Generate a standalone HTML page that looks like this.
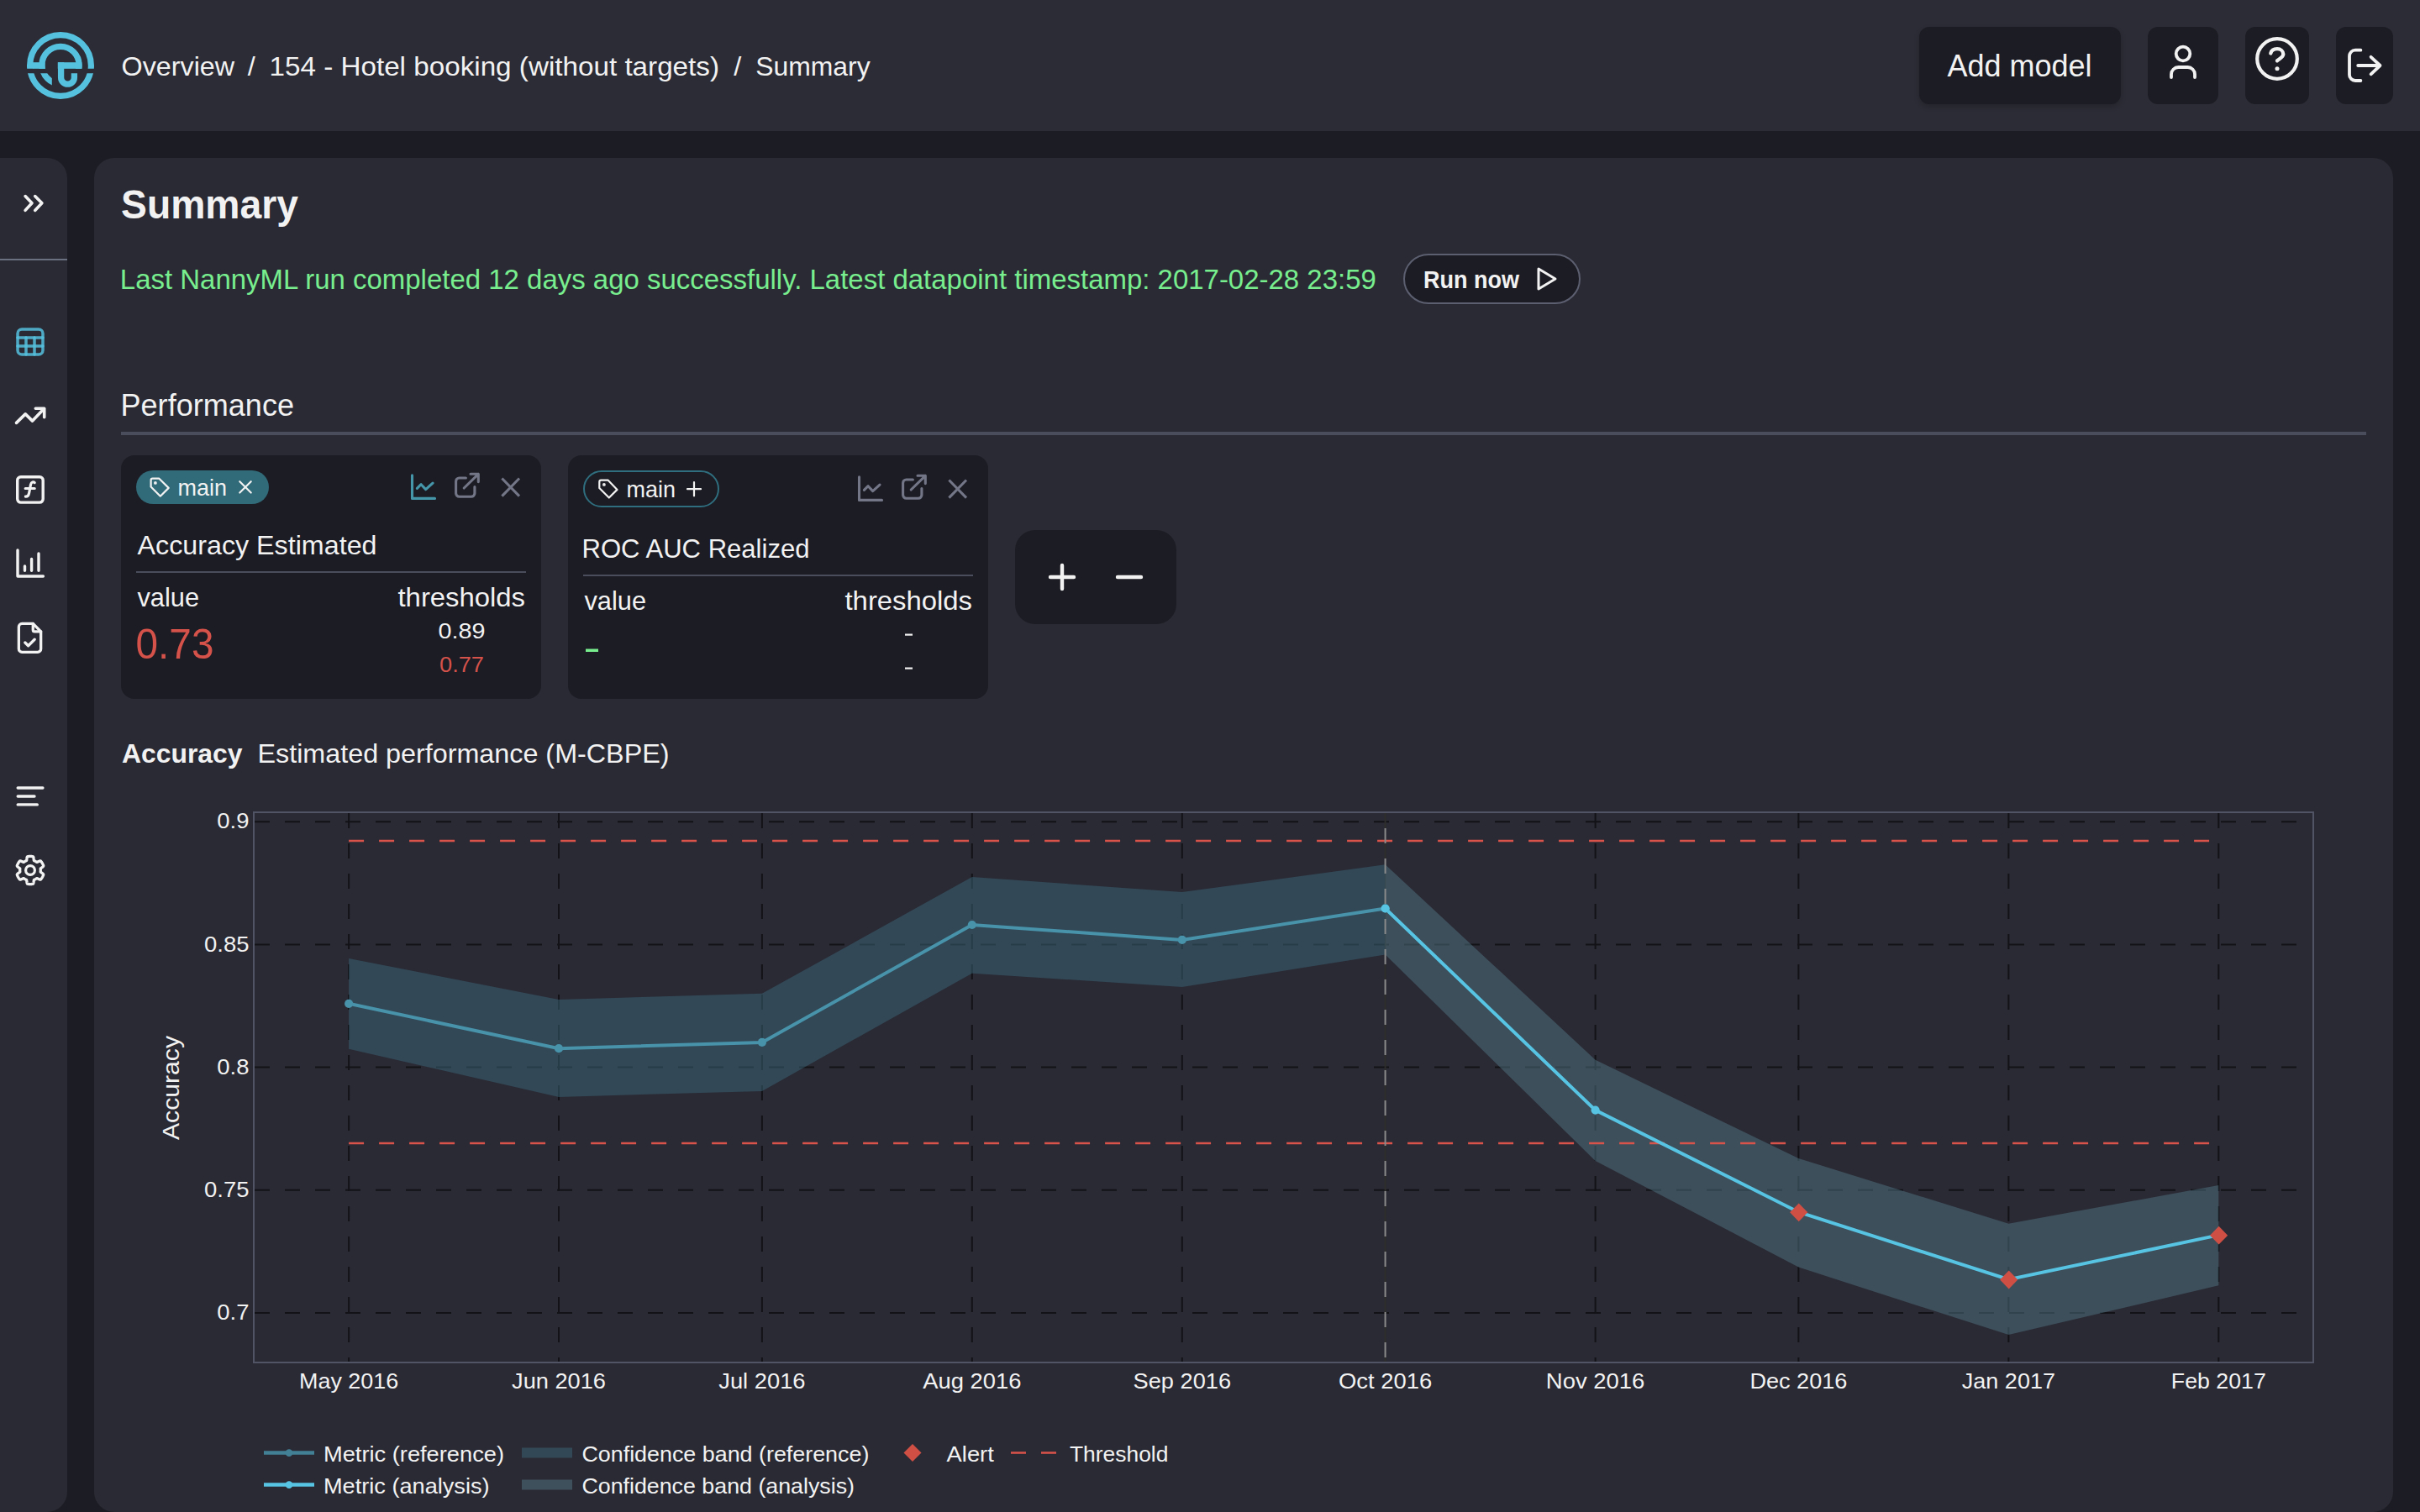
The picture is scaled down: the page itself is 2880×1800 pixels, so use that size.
<!DOCTYPE html>
<html><head><meta charset="utf-8"><title>Summary</title>
<style>
html,body{margin:0;padding:0;width:2880px;height:1800px;overflow:hidden;background:#1c1c24;font-family:"Liberation Sans",sans-serif;}
.abs{position:absolute;}
#header{left:0;top:0;width:2880px;height:156px;background:#2c2c36;}
#sidebar{left:0;top:188px;width:80px;height:1612px;background:#2a2a34;border-radius:0 24px 24px 0;}
#main{left:112px;top:188px;width:2736px;height:1612px;background:#2a2a34;border-radius:24px;}
.btn{background:#1c1c24;border-radius:12px;}
.card{background:#1c1c24;border-radius:16px;}
svg text{font-family:"Liberation Sans",sans-serif;}
</style></head><body>
<div class="abs" id="header"></div>
<div class="abs btn" style="left:2284px;top:32px;width:240px;height:92px;box-shadow:0 3px 6px rgba(0,0,0,0.18);"></div>
<div class="abs btn" style="left:2556px;top:32px;width:84px;height:92px;"></div>
<div class="abs btn" style="left:2672px;top:32px;width:76px;height:92px;"></div>
<div class="abs btn" style="left:2780px;top:32px;width:68px;height:92px;"></div>
<div class="abs" id="sidebar"></div>
<div class="abs" id="main"></div>
<div class="abs" style="left:0;top:308px;width:80px;height:2px;background:#6b7080;"></div>
<div class="abs" style="left:1670px;top:302px;width:207px;height:56px;border:2px solid #5c5f70;border-radius:30px;background:#1c1c24;"></div>
<div class="abs" style="left:144px;top:514px;width:2672px;height:4px;background:#4a4d5c;"></div>
<div class="abs card" style="left:144px;top:542px;width:500px;height:290px;"></div>
<div class="abs card" style="left:676px;top:542px;width:500px;height:290px;"></div>
<div class="abs" style="left:162px;top:560px;width:158px;height:40px;border-radius:20px;background:#316a78;"></div>
<div class="abs" style="left:694px;top:560px;width:158px;height:40px;border-radius:22px;border:2px solid #2f6e7e;"></div>
<div class="abs" style="left:162px;top:680px;width:464px;height:2px;background:#4a4d5c;"></div>
<div class="abs" style="left:694px;top:684px;width:464px;height:2px;background:#4a4d5c;"></div>
<div class="abs card" style="left:1208px;top:631px;width:192px;height:112px;border-radius:24px;"></div>

<svg class="abs" style="left:0;top:0" width="2880" height="1800" viewBox="0 0 2880 1800">
<g transform="translate(72,78)" fill="none" stroke="#55c1de">
<defs>
<clipPath id="lgUp"><rect x="-50" y="-50" width="100" height="53.8"/></clipPath>
<clipPath id="lgDn"><rect x="-50" y="9.3" width="100" height="50"/></clipPath>
<clipPath id="lgDnL"><rect x="-50" y="9.3" width="39.8" height="50"/></clipPath>
</defs>
<circle r="36.4" stroke-width="7.2" clip-path="url(#lgUp)"/>
<circle r="36.4" stroke-width="7.2" clip-path="url(#lgDn)"/>
<circle cy="-0.6" r="22.1" stroke-width="7.3" clip-path="url(#lgUp)"/>
<circle r="21.8" stroke-width="7.3" clip-path="url(#lgDnL)"/>
<rect x="-33" y="-3.8" width="14.5" height="7.6" fill="#55c1de" stroke="none"/>
<rect x="-3.2" y="-3.8" width="28.6" height="7.6" fill="#55c1de" stroke="none"/>
<path d="M0.6 -3.8 V14.3 A7.9 7.9 0 0 0 16.4 14.3 V9.3" stroke-width="7.3"/>
</g>
<text x="144.6" y="89.8" font-size="32" font-weight="400" fill="#f2f2f2" text-anchor="start" textLength="134.5" lengthAdjust="spacingAndGlyphs" >Overview</text>
<text x="294.8" y="89.8" font-size="32" font-weight="400" fill="#f2f2f2" text-anchor="start" textLength="9" lengthAdjust="spacingAndGlyphs" >/</text>
<text x="320.5" y="89.8" font-size="32" font-weight="400" fill="#f2f2f2" text-anchor="start" textLength="535.5" lengthAdjust="spacingAndGlyphs" >154 - Hotel booking (without targets)</text>
<text x="873.3" y="89.8" font-size="32" font-weight="400" fill="#f2f2f2" text-anchor="start" textLength="9" lengthAdjust="spacingAndGlyphs" >/</text>
<text x="899.2" y="89.8" font-size="32" font-weight="400" fill="#f2f2f2" text-anchor="start" textLength="136.5" lengthAdjust="spacingAndGlyphs" >Summary</text>
<text x="2317.5" y="90.8" font-size="36" font-weight="400" fill="#f2f2f2" text-anchor="start" textLength="172" lengthAdjust="spacingAndGlyphs" >Add model</text>
<g fill="none" stroke="#f2f2f2" stroke-width="3.8" stroke-linecap="round" stroke-linejoin="round">
<circle cx="2598" cy="64" r="8.3"/>
<path d="M2584 92 V88.5 A8.5 8.5 0 0 1 2592.5 80 H2603.5 A8.5 8.5 0 0 1 2612 88.5 V92"/>
<circle cx="2710" cy="70" r="23.8" stroke-width="4.2"/>
<path d="M2702.3 63.5 C2703.2 60 2706.3 58.2 2710 58.2 C2714.2 58.2 2717.3 61 2717.3 64.6 C2717.3 68 2713.8 69.3 2710 72.3" stroke-width="4.3"/>
<circle cx="2710" cy="81.8" r="2.5" fill="#f2f2f2" stroke="none"/>
<path d="M2809.4 59.7 H2803 A7 7 0 0 0 2796 66.7 V89 A7 7 0 0 0 2803 96 H2809.4"/>
<path d="M2806.2 78 H2832.5 M2821.6 67.8 L2832.5 78 L2821.6 88.3"/>
</g>
<g fill="none" stroke="#f2f2f2" stroke-width="3.4" stroke-linecap="round" stroke-linejoin="round">
<path d="M30.1 233.6 L38 241.8 L30.1 250.4 M41.7 233.6 L49.9 241.8 L41.7 250.4" stroke-width="3.6"/>
<g stroke="#55c1de" stroke-opacity="0.85" stroke-width="3.5"><rect x="21" y="392" width="30" height="30" rx="5"/><path d="M21 402 H51"/><path d="M21 412 H51"/><path d="M31 402 V422"/><path d="M41 402 V422"/></g>
<path d="M19.5 503.4 L30.2 492.9 L38.6 501.1 L52.7 486.3 M42.3 486.3 H52.7 V496.8" stroke-width="3.6"/>
<rect x="20.7" y="567.7" width="30.5" height="30.4" rx="4"/>
<path d="M41.2 574.6 C40 573.4 37.2 573.4 36.5 577 L34.6 587 C34 590.5 31.8 591.3 30.4 591.2 M30.2 581.5 H41.2" stroke-width="3.2"/>
<path d="M21 655 V686 H51.4 M29.5 674 V679.3 M37.6 665.5 V679.3 M46 658.9 V679.3"/>
<g transform="translate(12.95,736.8) scale(1.88)" stroke-width="1.75"><path d="M14 3v4a1 1 0 0 0 1 1h4"/><path d="M17 21h-10a2 2 0 0 1 -2 -2v-14a2 2 0 0 1 2 -2h7l5 5v11a2 2 0 0 1 -2 2z"/><path d="M9 15l2 2l4 -4"/></g>
<path d="M21.2 938 H50.9 M21.2 948 H41 M21.2 957.9 H44.3"/>

<path d="M48.30 1036.00 L48.30 1036.11 L48.30 1036.21 L48.30 1036.32 L48.29 1036.43 L48.29 1036.54 L48.28 1036.64 L48.28 1036.75 L48.27 1036.86 L48.26 1036.97 L48.25 1037.07 L48.24 1037.18 L48.23 1037.29 L48.22 1037.39 L48.21 1037.50 L48.19 1037.61 L48.18 1037.71 L48.19 1037.82 L48.23 1037.94 L48.32 1038.06 L48.45 1038.20 L48.61 1038.34 L48.80 1038.49 L49.02 1038.65 L49.26 1038.82 L49.52 1039.00 L49.78 1039.18 L50.05 1039.37 L50.32 1039.57 L50.58 1039.77 L50.82 1039.97 L51.04 1040.17 L51.24 1040.37 L51.41 1040.57 L51.55 1040.75 L51.65 1040.93 L51.70 1041.10 L51.72 1041.26 L51.70 1041.40 L51.65 1041.54 L51.60 1041.68 L51.55 1041.81 L51.50 1041.95 L51.44 1042.08 L51.39 1042.22 L51.34 1042.35 L51.28 1042.49 L51.22 1042.62 L51.16 1042.75 L51.11 1042.88 L51.04 1043.02 L50.98 1043.15 L50.92 1043.28 L50.86 1043.41 L50.79 1043.54 L50.72 1043.67 L50.66 1043.79 L50.59 1043.92 L50.52 1044.05 L50.45 1044.17 L50.38 1044.30 L50.30 1044.43 L50.23 1044.55 L50.15 1044.67 L50.08 1044.80 L50.00 1044.92 L49.92 1045.04 L49.84 1045.16 L49.76 1045.28 L49.68 1045.40 L49.60 1045.52 L49.51 1045.64 L49.43 1045.76 L49.34 1045.87 L49.26 1045.99 L49.17 1046.11 L49.08 1046.22 L48.99 1046.33 L48.90 1046.45 L48.81 1046.56 L48.72 1046.67 L48.62 1046.78 L48.53 1046.89 L48.42 1046.98 L48.27 1047.05 L48.10 1047.08 L47.89 1047.09 L47.66 1047.07 L47.41 1047.02 L47.14 1046.94 L46.85 1046.85 L46.55 1046.74 L46.25 1046.61 L45.95 1046.48 L45.65 1046.34 L45.35 1046.21 L45.07 1046.07 L44.80 1045.95 L44.56 1045.84 L44.33 1045.75 L44.13 1045.68 L43.95 1045.64 L43.80 1045.63 L43.67 1045.64 L43.57 1045.69 L43.49 1045.76 L43.40 1045.82 L43.32 1045.89 L43.23 1045.95 L43.14 1046.01 L43.05 1046.08 L42.97 1046.14 L42.88 1046.20 L42.79 1046.26 L42.70 1046.32 L42.61 1046.37 L42.52 1046.43 L42.43 1046.49 L42.33 1046.54 L42.24 1046.60 L42.15 1046.65 L42.06 1046.71 L41.96 1046.76 L41.87 1046.81 L41.77 1046.86 L41.68 1046.91 L41.58 1046.96 L41.49 1047.01 L41.39 1047.06 L41.30 1047.10 L41.20 1047.15 L41.10 1047.19 L41.00 1047.24 L40.90 1047.28 L40.81 1047.32 L40.71 1047.36 L40.61 1047.40 L40.52 1047.46 L40.44 1047.56 L40.38 1047.70 L40.32 1047.88 L40.28 1048.09 L40.25 1048.33 L40.22 1048.60 L40.19 1048.89 L40.16 1049.20 L40.14 1049.53 L40.10 1049.85 L40.07 1050.18 L40.02 1050.51 L39.97 1050.82 L39.91 1051.12 L39.84 1051.39 L39.75 1051.63 L39.66 1051.84 L39.55 1052.02 L39.43 1052.15 L39.31 1052.25 L39.17 1052.30 L39.03 1052.32 L38.88 1052.35 L38.74 1052.37 L38.60 1052.40 L38.45 1052.42 L38.31 1052.44 L38.17 1052.46 L38.02 1052.48 L37.88 1052.49 L37.74 1052.51 L37.59 1052.52 L37.45 1052.54 L37.30 1052.55 L37.16 1052.56 L37.01 1052.57 L36.87 1052.58 L36.72 1052.58 L36.58 1052.59 L36.43 1052.59 L36.29 1052.60 L36.14 1052.60 L36.00 1052.60 L35.86 1052.60 L35.71 1052.60 L35.57 1052.59 L35.42 1052.59 L35.28 1052.58 L35.13 1052.58 L34.99 1052.57 L34.84 1052.56 L34.70 1052.55 L34.55 1052.54 L34.41 1052.52 L34.26 1052.51 L34.12 1052.49 L33.98 1052.48 L33.83 1052.46 L33.69 1052.44 L33.55 1052.42 L33.40 1052.40 L33.26 1052.37 L33.12 1052.35 L32.97 1052.32 L32.83 1052.30 L32.69 1052.25 L32.57 1052.15 L32.45 1052.02 L32.34 1051.84 L32.25 1051.63 L32.16 1051.39 L32.09 1051.12 L32.03 1050.82 L31.98 1050.51 L31.93 1050.18 L31.90 1049.85 L31.86 1049.53 L31.84 1049.20 L31.81 1048.89 L31.78 1048.60 L31.75 1048.33 L31.72 1048.09 L31.68 1047.88 L31.62 1047.70 L31.56 1047.56 L31.48 1047.46 L31.39 1047.40 L31.29 1047.36 L31.19 1047.32 L31.10 1047.28 L31.00 1047.24 L30.90 1047.19 L30.80 1047.15 L30.70 1047.10 L30.61 1047.06 L30.51 1047.01 L30.42 1046.96 L30.32 1046.91 L30.23 1046.86 L30.13 1046.81 L30.04 1046.76 L29.94 1046.71 L29.85 1046.65 L29.76 1046.60 L29.67 1046.54 L29.57 1046.49 L29.48 1046.43 L29.39 1046.37 L29.30 1046.32 L29.21 1046.26 L29.12 1046.20 L29.03 1046.14 L28.95 1046.08 L28.86 1046.01 L28.77 1045.95 L28.68 1045.89 L28.60 1045.82 L28.51 1045.76 L28.43 1045.69 L28.33 1045.64 L28.20 1045.63 L28.05 1045.64 L27.87 1045.68 L27.67 1045.75 L27.44 1045.84 L27.20 1045.95 L26.93 1046.07 L26.65 1046.21 L26.35 1046.34 L26.05 1046.48 L25.75 1046.61 L25.45 1046.74 L25.15 1046.85 L24.86 1046.94 L24.59 1047.02 L24.34 1047.07 L24.11 1047.09 L23.90 1047.08 L23.73 1047.05 L23.58 1046.98 L23.47 1046.89 L23.38 1046.78 L23.28 1046.67 L23.19 1046.56 L23.10 1046.45 L23.01 1046.33 L22.92 1046.22 L22.83 1046.11 L22.74 1045.99 L22.66 1045.87 L22.57 1045.76 L22.49 1045.64 L22.40 1045.52 L22.32 1045.40 L22.24 1045.28 L22.16 1045.16 L22.08 1045.04 L22.00 1044.92 L21.92 1044.80 L21.85 1044.67 L21.77 1044.55 L21.70 1044.43 L21.62 1044.30 L21.55 1044.17 L21.48 1044.05 L21.41 1043.92 L21.34 1043.79 L21.28 1043.67 L21.21 1043.54 L21.14 1043.41 L21.08 1043.28 L21.02 1043.15 L20.96 1043.02 L20.89 1042.88 L20.84 1042.75 L20.78 1042.62 L20.72 1042.49 L20.66 1042.35 L20.61 1042.22 L20.56 1042.08 L20.50 1041.95 L20.45 1041.81 L20.40 1041.68 L20.35 1041.54 L20.30 1041.40 L20.28 1041.26 L20.30 1041.10 L20.35 1040.93 L20.45 1040.75 L20.59 1040.57 L20.76 1040.37 L20.96 1040.17 L21.18 1039.97 L21.42 1039.77 L21.68 1039.57 L21.95 1039.37 L22.22 1039.18 L22.48 1039.00 L22.74 1038.82 L22.98 1038.65 L23.20 1038.49 L23.39 1038.34 L23.55 1038.20 L23.68 1038.06 L23.77 1037.94 L23.81 1037.82 L23.82 1037.71 L23.81 1037.61 L23.79 1037.50 L23.78 1037.39 L23.77 1037.29 L23.76 1037.18 L23.75 1037.07 L23.74 1036.97 L23.73 1036.86 L23.72 1036.75 L23.72 1036.64 L23.71 1036.54 L23.71 1036.43 L23.70 1036.32 L23.70 1036.21 L23.70 1036.11 L23.70 1036.00 L23.70 1035.89 L23.70 1035.79 L23.70 1035.68 L23.71 1035.57 L23.71 1035.46 L23.72 1035.36 L23.72 1035.25 L23.73 1035.14 L23.74 1035.03 L23.75 1034.93 L23.76 1034.82 L23.77 1034.71 L23.78 1034.61 L23.79 1034.50 L23.81 1034.39 L23.82 1034.29 L23.81 1034.18 L23.77 1034.06 L23.68 1033.94 L23.55 1033.80 L23.39 1033.66 L23.20 1033.51 L22.98 1033.35 L22.74 1033.18 L22.48 1033.00 L22.22 1032.82 L21.95 1032.63 L21.68 1032.43 L21.42 1032.23 L21.18 1032.03 L20.96 1031.83 L20.76 1031.63 L20.59 1031.43 L20.45 1031.25 L20.35 1031.07 L20.30 1030.90 L20.28 1030.74 L20.30 1030.60 L20.35 1030.46 L20.40 1030.32 L20.45 1030.19 L20.50 1030.05 L20.56 1029.92 L20.61 1029.78 L20.66 1029.65 L20.72 1029.51 L20.78 1029.38 L20.84 1029.25 L20.89 1029.12 L20.96 1028.98 L21.02 1028.85 L21.08 1028.72 L21.14 1028.59 L21.21 1028.46 L21.28 1028.33 L21.34 1028.21 L21.41 1028.08 L21.48 1027.95 L21.55 1027.83 L21.62 1027.70 L21.70 1027.57 L21.77 1027.45 L21.85 1027.33 L21.92 1027.20 L22.00 1027.08 L22.08 1026.96 L22.16 1026.84 L22.24 1026.72 L22.32 1026.60 L22.40 1026.48 L22.49 1026.36 L22.57 1026.24 L22.66 1026.13 L22.74 1026.01 L22.83 1025.89 L22.92 1025.78 L23.01 1025.67 L23.10 1025.55 L23.19 1025.44 L23.28 1025.33 L23.38 1025.22 L23.47 1025.11 L23.58 1025.02 L23.73 1024.95 L23.90 1024.92 L24.11 1024.91 L24.34 1024.93 L24.59 1024.98 L24.86 1025.06 L25.15 1025.15 L25.45 1025.26 L25.75 1025.39 L26.05 1025.52 L26.35 1025.66 L26.65 1025.79 L26.93 1025.93 L27.20 1026.05 L27.44 1026.16 L27.67 1026.25 L27.87 1026.32 L28.05 1026.36 L28.20 1026.37 L28.33 1026.36 L28.43 1026.31 L28.51 1026.24 L28.60 1026.18 L28.68 1026.11 L28.77 1026.05 L28.86 1025.99 L28.95 1025.92 L29.03 1025.86 L29.12 1025.80 L29.21 1025.74 L29.30 1025.68 L29.39 1025.63 L29.48 1025.57 L29.57 1025.51 L29.67 1025.46 L29.76 1025.40 L29.85 1025.35 L29.94 1025.29 L30.04 1025.24 L30.13 1025.19 L30.23 1025.14 L30.32 1025.09 L30.42 1025.04 L30.51 1024.99 L30.61 1024.94 L30.70 1024.90 L30.80 1024.85 L30.90 1024.81 L31.00 1024.76 L31.10 1024.72 L31.19 1024.68 L31.29 1024.64 L31.39 1024.60 L31.48 1024.54 L31.56 1024.44 L31.62 1024.30 L31.68 1024.12 L31.72 1023.91 L31.75 1023.67 L31.78 1023.40 L31.81 1023.11 L31.84 1022.80 L31.86 1022.47 L31.90 1022.15 L31.93 1021.82 L31.98 1021.49 L32.03 1021.18 L32.09 1020.88 L32.16 1020.61 L32.25 1020.37 L32.34 1020.16 L32.45 1019.98 L32.57 1019.85 L32.69 1019.75 L32.83 1019.70 L32.97 1019.68 L33.12 1019.65 L33.26 1019.63 L33.40 1019.60 L33.55 1019.58 L33.69 1019.56 L33.83 1019.54 L33.98 1019.52 L34.12 1019.51 L34.26 1019.49 L34.41 1019.48 L34.55 1019.46 L34.70 1019.45 L34.84 1019.44 L34.99 1019.43 L35.13 1019.42 L35.28 1019.42 L35.42 1019.41 L35.57 1019.41 L35.71 1019.40 L35.86 1019.40 L36.00 1019.40 L36.14 1019.40 L36.29 1019.40 L36.43 1019.41 L36.58 1019.41 L36.72 1019.42 L36.87 1019.42 L37.01 1019.43 L37.16 1019.44 L37.30 1019.45 L37.45 1019.46 L37.59 1019.48 L37.74 1019.49 L37.88 1019.51 L38.02 1019.52 L38.17 1019.54 L38.31 1019.56 L38.45 1019.58 L38.60 1019.60 L38.74 1019.63 L38.88 1019.65 L39.03 1019.68 L39.17 1019.70 L39.31 1019.75 L39.43 1019.85 L39.55 1019.98 L39.66 1020.16 L39.75 1020.37 L39.84 1020.61 L39.91 1020.88 L39.97 1021.18 L40.02 1021.49 L40.07 1021.82 L40.10 1022.15 L40.14 1022.47 L40.16 1022.80 L40.19 1023.11 L40.22 1023.40 L40.25 1023.67 L40.28 1023.91 L40.32 1024.12 L40.38 1024.30 L40.44 1024.44 L40.52 1024.54 L40.61 1024.60 L40.71 1024.64 L40.81 1024.68 L40.90 1024.72 L41.00 1024.76 L41.10 1024.81 L41.20 1024.85 L41.30 1024.90 L41.39 1024.94 L41.49 1024.99 L41.58 1025.04 L41.68 1025.09 L41.77 1025.14 L41.87 1025.19 L41.96 1025.24 L42.06 1025.29 L42.15 1025.35 L42.24 1025.40 L42.33 1025.46 L42.43 1025.51 L42.52 1025.57 L42.61 1025.63 L42.70 1025.68 L42.79 1025.74 L42.88 1025.80 L42.97 1025.86 L43.05 1025.92 L43.14 1025.99 L43.23 1026.05 L43.32 1026.11 L43.40 1026.18 L43.49 1026.24 L43.57 1026.31 L43.67 1026.36 L43.80 1026.37 L43.95 1026.36 L44.13 1026.32 L44.33 1026.25 L44.56 1026.16 L44.80 1026.05 L45.07 1025.93 L45.35 1025.79 L45.65 1025.66 L45.95 1025.52 L46.25 1025.39 L46.55 1025.26 L46.85 1025.15 L47.14 1025.06 L47.41 1024.98 L47.66 1024.93 L47.89 1024.91 L48.10 1024.92 L48.27 1024.95 L48.42 1025.02 L48.53 1025.11 L48.62 1025.22 L48.72 1025.33 L48.81 1025.44 L48.90 1025.55 L48.99 1025.67 L49.08 1025.78 L49.17 1025.89 L49.26 1026.01 L49.34 1026.13 L49.43 1026.24 L49.51 1026.36 L49.60 1026.48 L49.68 1026.60 L49.76 1026.72 L49.84 1026.84 L49.92 1026.96 L50.00 1027.08 L50.08 1027.20 L50.15 1027.33 L50.23 1027.45 L50.30 1027.57 L50.38 1027.70 L50.45 1027.83 L50.52 1027.95 L50.59 1028.08 L50.66 1028.21 L50.72 1028.33 L50.79 1028.46 L50.86 1028.59 L50.92 1028.72 L50.98 1028.85 L51.04 1028.98 L51.11 1029.12 L51.16 1029.25 L51.22 1029.38 L51.28 1029.51 L51.34 1029.65 L51.39 1029.78 L51.44 1029.92 L51.50 1030.05 L51.55 1030.19 L51.60 1030.32 L51.65 1030.46 L51.70 1030.60 L51.72 1030.74 L51.70 1030.90 L51.65 1031.07 L51.55 1031.25 L51.41 1031.43 L51.24 1031.63 L51.04 1031.83 L50.82 1032.03 L50.58 1032.23 L50.32 1032.43 L50.05 1032.63 L49.78 1032.82 L49.52 1033.00 L49.26 1033.18 L49.02 1033.35 L48.80 1033.51 L48.61 1033.66 L48.45 1033.80 L48.32 1033.94 L48.23 1034.06 L48.19 1034.18 L48.18 1034.29 L48.19 1034.39 L48.21 1034.50 L48.22 1034.61 L48.23 1034.71 L48.24 1034.82 L48.25 1034.93 L48.26 1035.03 L48.27 1035.14 L48.28 1035.25 L48.28 1035.36 L48.29 1035.46 L48.29 1035.57 L48.30 1035.68 L48.30 1035.79 L48.30 1035.89 Z" fill="none" stroke="#f2f2f2" stroke-width="3.3" stroke-linejoin="round"/>
<circle cx="36" cy="1036" r="5.4" fill="none" stroke="#f2f2f2" stroke-width="3.2"/>
</g>
<text x="144" y="260.3" font-size="49" font-weight="700" fill="#f2f2f2" text-anchor="start" textLength="211" lengthAdjust="spacingAndGlyphs" >Summary</text>
<text x="142.8" y="343.8" font-size="32.5" font-weight="400" fill="#78ee8e" text-anchor="start" textLength="1495" lengthAdjust="spacingAndGlyphs" >Last NannyML run completed 12 days ago successfully. Latest datapoint timestamp: 2017-02-28 23:59</text>
<text x="1694" y="342.6" font-size="29" font-weight="700" fill="#f2f2f2" text-anchor="start" textLength="114" lengthAdjust="spacingAndGlyphs" >Run now</text>
<path d="M1831 320 L1851 332 L1831 344 Z" fill="none" stroke="#f2f2f2" stroke-width="3" stroke-linejoin="round"/>
<text x="143.5" y="495" font-size="36" font-weight="400" fill="#f2f2f2" text-anchor="start" textLength="206.5" lengthAdjust="spacingAndGlyphs" >Performance</text>
<g fill="none" stroke="#f2f2f2" stroke-width="2.2" stroke-linecap="round" stroke-linejoin="round">
<path d="M179.6 579.5 V571.7 A2 2 0 0 1 181.6 569.7 H189.4 L200.7 580.9 L190.8 590.7 Z"/>
<circle cx="184.9" cy="574.9" r="0.8" fill="#f2f2f2"/>
<path d="M285.3 573.2 L298.7 586.5 M298.7 573.2 L285.3 586.5"/>
<path d="M713.3 581 V573.7 A2 2 0 0 1 715.3 571.7 H723.7 L734.5 582.9 L724.8 592.5 Z"/>
<circle cx="718.9" cy="576.9" r="0.8" fill="#f2f2f2"/>
<path d="M818 582.2 H834 M826 574 V590.3"/>
</g>
<text x="211.5" y="590" font-size="28" font-weight="400" fill="#f2f2f2" text-anchor="start" textLength="58.5" lengthAdjust="spacingAndGlyphs" >main</text>
<text x="745.5" y="592.2" font-size="28" font-weight="400" fill="#f2f2f2" text-anchor="start" textLength="58.5" lengthAdjust="spacingAndGlyphs" >main</text>
<g transform="translate(0,0)" fill="none" stroke-width="3.1" stroke-linecap="round" stroke-linejoin="round">
<path d="M490.5 565.8 V593.4 H517.5" stroke="#4696aa"/>
<path d="M496.4 581.3 L501.1 576.7 L506.7 582.6 L515 575.1" stroke="#4696aa"/>
<path d="M554.4 569 H546.6 A4 4 0 0 0 542.6 573 V587.3 A4 4 0 0 0 546.6 591.3 H560.9 A4 4 0 0 0 564.9 587.3 V579.5" stroke="#737687"/>
<path d="M552.2 581 L569.3 564.3 M560 564.3 H569.3 V573.6" stroke="#737687"/>
<path d="M597.4 569.5 L618 590.7 M618 569.5 L597.4 590.7" stroke="#737687" stroke-linecap="butt"/>
</g>
<g transform="translate(532,2)" fill="none" stroke-width="3.1" stroke-linecap="round" stroke-linejoin="round">
<path d="M490.5 565.8 V593.4 H517.5" stroke="#737687"/>
<path d="M496.4 581.3 L501.1 576.7 L506.7 582.6 L515 575.1" stroke="#737687"/>
<path d="M554.4 569 H546.6 A4 4 0 0 0 542.6 573 V587.3 A4 4 0 0 0 546.6 591.3 H560.9 A4 4 0 0 0 564.9 587.3 V579.5" stroke="#737687"/>
<path d="M552.2 581 L569.3 564.3 M560 564.3 H569.3 V573.6" stroke="#737687"/>
<path d="M597.4 569.5 L618 590.7 M618 569.5 L597.4 590.7" stroke="#737687" stroke-linecap="butt"/>
</g>
<text x="163.5" y="660" font-size="32" font-weight="400" fill="#f2f2f2" text-anchor="start" textLength="285" lengthAdjust="spacingAndGlyphs" >Accuracy Estimated</text>
<text x="163.5" y="721.5" font-size="32" font-weight="400" fill="#f2f2f2" text-anchor="start" textLength="73.5" lengthAdjust="spacingAndGlyphs" >value</text>
<text x="625" y="721.5" font-size="32" font-weight="400" fill="#f2f2f2" text-anchor="end" textLength="151.5" lengthAdjust="spacingAndGlyphs" >thresholds</text>
<text x="161.5" y="784" font-size="50" font-weight="400" fill="#d4524a" text-anchor="start" textLength="93" lengthAdjust="spacingAndGlyphs" >0.73</text>
<text x="549.5" y="760" font-size="26" font-weight="400" fill="#f2f2f2" text-anchor="middle" textLength="56" lengthAdjust="spacingAndGlyphs" >0.89</text>
<text x="549.5" y="799.6" font-size="26" font-weight="400" fill="#d4524a" text-anchor="middle" textLength="53" lengthAdjust="spacingAndGlyphs" >0.77</text>
<text x="692.5" y="664.4" font-size="32" font-weight="400" fill="#f2f2f2" text-anchor="start" textLength="271" lengthAdjust="spacingAndGlyphs" >ROC AUC Realized</text>
<text x="695.5" y="725.7" font-size="32" font-weight="400" fill="#f2f2f2" text-anchor="start" textLength="73.5" lengthAdjust="spacingAndGlyphs" >value</text>
<text x="1157" y="725.7" font-size="32" font-weight="400" fill="#f2f2f2" text-anchor="end" textLength="151.5" lengthAdjust="spacingAndGlyphs" >thresholds</text>
<rect x="697" y="772.5" width="15" height="3.5" fill="#78ee8e"/>
<rect x="1077" y="754.5" width="9" height="2.2" fill="#f2f2f2"/>
<rect x="1077" y="794.5" width="9" height="2.2" fill="#f2f2f2"/>
<g stroke="#f2f2f2" stroke-width="4.4" stroke-linecap="round"><path d="M1250 687 H1278 M1264 673 V701 M1330 687 H1358"/></g>
<text x="145" y="908.3" font-size="32" font-weight="700" fill="#f2f2f2" text-anchor="start" textLength="143.5" lengthAdjust="spacingAndGlyphs" >Accuracy</text>
<text x="306.5" y="908.3" font-size="32" font-weight="400" fill="#f2f2f2" text-anchor="start" textLength="490" lengthAdjust="spacingAndGlyphs" >Estimated performance (M-CBPE)</text>
<g>
<path d="M303 978.2 H2749" stroke="#121217" stroke-width="2" stroke-dasharray="18 18"/>
<path d="M303 1124.4 H2749" stroke="#121217" stroke-width="2" stroke-dasharray="18 18"/>
<path d="M303 1270.6 H2749" stroke="#121217" stroke-width="2" stroke-dasharray="18 18"/>
<path d="M303 1416.8 H2749" stroke="#121217" stroke-width="2" stroke-dasharray="18 18"/>
<path d="M303 1563 H2749" stroke="#121217" stroke-width="2" stroke-dasharray="18 18"/>
<path d="M415.1 968 V1622" stroke="#121217" stroke-width="2" stroke-dasharray="18 18"/>
<path d="M665.0 968 V1622" stroke="#121217" stroke-width="2" stroke-dasharray="18 18"/>
<path d="M906.9 968 V1622" stroke="#121217" stroke-width="2" stroke-dasharray="18 18"/>
<path d="M1156.8 968 V1622" stroke="#121217" stroke-width="2" stroke-dasharray="18 18"/>
<path d="M1406.8 968 V1622" stroke="#121217" stroke-width="2" stroke-dasharray="18 18"/>
<path d="M1648.6 968 V1622" stroke="#2e2e2c" stroke-width="2" stroke-dasharray="18 18"/>
<path d="M1898.6 968 V1622" stroke="#121217" stroke-width="2" stroke-dasharray="18 18"/>
<path d="M2140.4 968 V1622" stroke="#121217" stroke-width="2" stroke-dasharray="18 18"/>
<path d="M2390.4 968 V1622" stroke="#121217" stroke-width="2" stroke-dasharray="18 18"/>
<path d="M2640.3 968 V1622" stroke="#121217" stroke-width="2" stroke-dasharray="18 18"/>
<polygon points="415.1,1141.0 665.0,1190.0 906.9,1182.8 1156.8,1044.1 1406.8,1062.0 1648.6,1029.3 1648.6,1136.5 1406.8,1175.0 1156.8,1158.7 906.9,1298.9 665.0,1305.9 415.1,1248.7" fill="#3a6678" fill-opacity="0.5"/>
<polygon points="1648.6,1029.3 1898.6,1261.7 2140.4,1379.0 2390.4,1456.8 2640.3,1411.0 2640.3,1530.3 2390.4,1589.1 2140.4,1508.6 1898.6,1381.9 1648.6,1136.5" fill="#507482" fill-opacity="0.5"/>
<path d="M415.1 1001 H2640.3" stroke="#d9534a" stroke-width="2.5" stroke-dasharray="18 18"/>
<path d="M415.1 1361 H2640.3" stroke="#d9534a" stroke-width="2.5" stroke-dasharray="18 18"/>
<path d="M1648.6 986 V1622" stroke="#8a8a8a" stroke-width="2" stroke-dasharray="18 18"/>
<polyline points="415.1,1194.8 665.0,1248.2 906.9,1240.9 1156.8,1101.0 1406.8,1118.9 1648.6,1081.5" fill="none" stroke="#4892aa" stroke-width="4"/>
<polyline points="1648.6,1081.5 1898.6,1321.6 2140.4,1443.0 2390.4,1523.2 2640.3,1470.4" fill="none" stroke="#57c4e3" stroke-width="4"/>
<circle cx="415.1" cy="1194.8" r="5.1" fill="#4892aa"/>
<circle cx="665.0" cy="1248.2" r="5.1" fill="#4892aa"/>
<circle cx="906.9" cy="1240.9" r="5.1" fill="#4892aa"/>
<circle cx="1156.8" cy="1101" r="5.1" fill="#4892aa"/>
<circle cx="1406.8" cy="1118.9" r="5.1" fill="#4892aa"/>
<circle cx="1648.6" cy="1081.5" r="5.1" fill="#4892aa"/>
<circle cx="1648.6" cy="1081.5" r="5.1" fill="#57c4e3"/>
<circle cx="1898.6" cy="1321.6" r="5.1" fill="#57c4e3"/>
<path d="M2140.7 1432.4 L2151.3 1443.3 L2140.7 1454.2 L2130.1 1443.3 Z" fill="#cf4f45"/>
<path d="M2390.7 1512.6000000000001 L2401.3 1523.5 L2390.7 1534.4 L2380.1 1523.5 Z" fill="#cf4f45"/>
<path d="M2640.6 1459.8000000000002 L2651.2 1470.7 L2640.6 1481.6000000000001 L2630.0 1470.7 Z" fill="#cf4f45"/>
<rect x="302" y="967" width="2451" height="655" fill="none" stroke="#505465" stroke-width="2"/>
<text x="296.5" y="986.3000000000001" font-size="25" font-weight="400" fill="#f2f2f2" text-anchor="end" textLength="38.2" lengthAdjust="spacingAndGlyphs" >0.9</text>
<text x="296.5" y="1132.5" font-size="25" font-weight="400" fill="#f2f2f2" text-anchor="end" textLength="53.5" lengthAdjust="spacingAndGlyphs" >0.85</text>
<text x="296.5" y="1278.6999999999998" font-size="25" font-weight="400" fill="#f2f2f2" text-anchor="end" textLength="38.2" lengthAdjust="spacingAndGlyphs" >0.8</text>
<text x="296.5" y="1424.8999999999999" font-size="25" font-weight="400" fill="#f2f2f2" text-anchor="end" textLength="53.5" lengthAdjust="spacingAndGlyphs" >0.75</text>
<text x="296.5" y="1571.1" font-size="25" font-weight="400" fill="#f2f2f2" text-anchor="end" textLength="38.2" lengthAdjust="spacingAndGlyphs" >0.7</text>
<text x="415.1" y="1653" font-size="25" font-weight="400" fill="#f2f2f2" text-anchor="middle" textLength="118.2" lengthAdjust="spacingAndGlyphs" >May 2016</text>
<text x="665.0" y="1653" font-size="25" font-weight="400" fill="#f2f2f2" text-anchor="middle" textLength="111.9" lengthAdjust="spacingAndGlyphs" >Jun 2016</text>
<text x="906.9" y="1653" font-size="25" font-weight="400" fill="#f2f2f2" text-anchor="middle" textLength="103.3" lengthAdjust="spacingAndGlyphs" >Jul 2016</text>
<text x="1156.8" y="1653" font-size="25" font-weight="400" fill="#f2f2f2" text-anchor="middle" textLength="117.2" lengthAdjust="spacingAndGlyphs" >Aug 2016</text>
<text x="1406.8" y="1653" font-size="25" font-weight="400" fill="#f2f2f2" text-anchor="middle" textLength="116.5" lengthAdjust="spacingAndGlyphs" >Sep 2016</text>
<text x="1648.6" y="1653" font-size="25" font-weight="400" fill="#f2f2f2" text-anchor="middle" textLength="111.3" lengthAdjust="spacingAndGlyphs" >Oct 2016</text>
<text x="1898.6" y="1653" font-size="25" font-weight="400" fill="#f2f2f2" text-anchor="middle" textLength="117.5" lengthAdjust="spacingAndGlyphs" >Nov 2016</text>
<text x="2140.4" y="1653" font-size="25" font-weight="400" fill="#f2f2f2" text-anchor="middle" textLength="116.0" lengthAdjust="spacingAndGlyphs" >Dec 2016</text>
<text x="2390.4" y="1653" font-size="25" font-weight="400" fill="#f2f2f2" text-anchor="middle" textLength="111.1" lengthAdjust="spacingAndGlyphs" >Jan 2017</text>
<text x="2640.3" y="1653" font-size="25" font-weight="400" fill="#f2f2f2" text-anchor="middle" textLength="113.0" lengthAdjust="spacingAndGlyphs" >Feb 2017</text>
<text x="0" y="0" font-size="28" font-weight="400" fill="#f2f2f2" text-anchor="middle" textLength="124" lengthAdjust="spacingAndGlyphs" transform="translate(213.2,1295) rotate(-90)">Accuracy</text>
<g stroke-width="4.5">
<path d="M314 1729.6 H374" stroke="#428096"/><circle cx="344" cy="1729.6" r="4.3" fill="#428096" stroke="none"/>
<path d="M314 1767.6 H374" stroke="#57c4e3"/><circle cx="344" cy="1767.6" r="4.3" fill="#57c4e3" stroke="none"/>
</g>
<rect x="621" y="1723.5" width="60" height="12" fill="#324856"/>
<rect x="621" y="1761.5" width="60" height="12" fill="#3e505c"/>
<path d="M1086 1719 L1096.5 1729.5 L1086 1740 L1075.5 1729.5 Z" fill="#cf4f45"/>
<path d="M1203 1729.5 H1221 M1239 1729.5 H1257" stroke="#d9534a" stroke-width="2.5"/>
<text x="385" y="1739.8" font-size="25.5" font-weight="400" fill="#f2f2f2" text-anchor="start" textLength="215" lengthAdjust="spacingAndGlyphs" >Metric (reference)</text>
<text x="385" y="1777.8" font-size="25.5" font-weight="400" fill="#f2f2f2" text-anchor="start" textLength="197.6" lengthAdjust="spacingAndGlyphs" >Metric (analysis)</text>
<text x="692.4" y="1739.8" font-size="25.5" font-weight="400" fill="#f2f2f2" text-anchor="start" textLength="342" lengthAdjust="spacingAndGlyphs" >Confidence band (reference)</text>
<text x="692.4" y="1777.8" font-size="25.5" font-weight="400" fill="#f2f2f2" text-anchor="start" textLength="324.6" lengthAdjust="spacingAndGlyphs" >Confidence band (analysis)</text>
<text x="1126.6" y="1739.8" font-size="25.5" font-weight="400" fill="#f2f2f2" text-anchor="start" textLength="56.2" lengthAdjust="spacingAndGlyphs" >Alert</text>
<text x="1273" y="1739.8" font-size="25.5" font-weight="400" fill="#f2f2f2" text-anchor="start" textLength="117.4" lengthAdjust="spacingAndGlyphs" >Threshold</text>
</g>
</svg>
</body></html>
